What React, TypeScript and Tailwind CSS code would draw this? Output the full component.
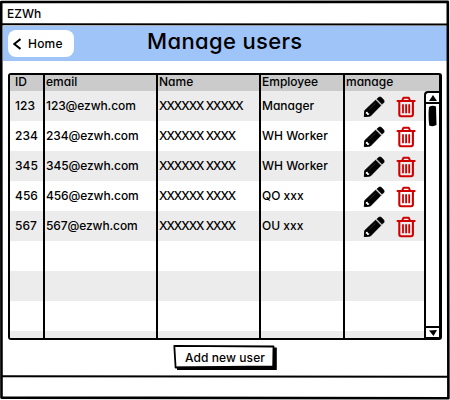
import React from "react";

const users = [
  { id: "123", email: "123@ezwh.com", name: "XXXXXX XXXXX", role: "Manager" },
  { id: "234", email: "234@ezwh.com", name: "XXXXXX XXXX", role: "WH Worker" },
  { id: "345", email: "345@ezwh.com", name: "XXXXXX XXXX", role: "WH Worker" },
  { id: "456", email: "456@ezwh.com", name: "XXXXXX XXXX", role: "QO xxx" },
  { id: "567", email: "567@ezwh.com", name: "XXXXXX XXXX", role: "OU xxx" },
];

function Pencil() {
  return (
    <svg width="22" height="22" viewBox="0 0 22 22" aria-hidden="true">
      <path d="M1.3 20.6L1.8 14.6L12.6 4.2L17.8 9.4L7.4 20Z" stroke="#000" strokeWidth="1" strokeLinejoin="round" />
      <path d="M13.8 3.1L15.8 1.3Q17 .5 18.2 1.3L20.8 3.9Q21.6 5.2 20.9 6.4L19 8.3Z" stroke="#000" strokeWidth=".6" />
      <path d="M3 16L4.6 15.7L5 17.2L6.4 17.5L6 18.7L4.3 18.9L3.7 17.8L2.7 17.7Z" fill="#fff" />
      <path d="M6.2 13.5L12.5 7.3" stroke="#555" strokeWidth=".5" />
    </svg>
  );
}

function Trash() {
  return (
    <svg width="20" height="22" viewBox="0 0 20 22" fill="none" stroke="#d00000" aria-hidden="true">
      <path d="M1.6 5H18.6" strokeWidth="2.2" strokeLinecap="round" />
      <path d="M6.2 4.5L7.5 1.7H12.7L14 4.5" strokeWidth="1.9" strokeLinejoin="round" />
      <path d="M3.3 5.5V18.3Q3.3 20.2 5.2 20.2H15Q16.9 20.2 16.9 18.3V5.5" strokeWidth="2.1" />
      <path d="M7 8.3V17.2M10.1 8.3V17.2M13.2 8.3V17.2" strokeWidth="1.8" />
    </svg>
  );
}

function ScrollBar() {
  return (
    <div className="absolute right-0 top-[16px] flex h-[248px] w-[15px] flex-col items-center rounded-tl-sm border-2 border-r-0 border-black bg-white">
      <div className="flex h-[11px] w-full shrink-0 items-center justify-center border-b-2 border-black">
        <svg width="8" height="6" viewBox="0 0 8 6" aria-hidden="true"><path d="M4 0L8 6H0Z" /></svg>
      </div>
      <svg className="mt-px shrink-0" width="9" height="22" viewBox="0 0 9 22" aria-hidden="true"><path d="M1 2Q4.5-.3 8 1.5L8.5 20Q5 22 1.2 20.5Q0 10 1 2Z" /></svg>
      <div className="mt-auto flex h-[11px] w-full items-center justify-center border-t-2 border-black">
        <svg width="8" height="6" viewBox="0 0 8 6" aria-hidden="true"><path d="M0 .5L8 0L4.5 6Z" /></svg>
      </div>
    </div>
  );
}

const grid = "grid grid-cols-[35px_113px_103px_84px_1fr]";
const cell = "border-r-2 border-black whitespace-nowrap flex items-center";
const head = "border-r-2 border-black whitespace-nowrap pl-px leading-[14px]";

export default function App() {
  return (
    <div className="relative flex h-[400px] w-[450px] flex-col overflow-hidden bg-white font-['Inter','Open_Sans',sans-serif] text-[12px] font-medium text-black [font-feature-settings:'cv11']">
      <div className="flex h-[26px] shrink-0 items-center pl-[7px] pt-px">EZWh</div>
      <header className="mx-[3px] flex h-[35px] shrink-0 items-center bg-[#9fc4f8]">
        <button className="ml-[5px] flex h-[27px] w-[66px] items-center rounded-[8px] bg-white pl-[5px] tracking-[0.2px]">
          <svg className="mr-[7px]" width="8" height="12" viewBox="0 0 8 12" fill="none" stroke="#000" strokeWidth="2" aria-hidden="true"><path d="M7.5 1L1.2 6L7.5 11" /></svg>
          Home
        </button>
        <h1 className="-mt-[5px] ml-[73px] text-[22px] leading-[26px] tracking-[0.35px] whitespace-nowrap">Manage users</h1>
      </header>
      <main className="relative ml-[8px] mt-[12px] h-[267px] w-[434px] shrink-0 overflow-hidden rounded-[3px] border-[2px] border-r-[3px] border-black">
        <div className={`${grid} h-[16px] bg-[#cbcbcb]`}>
          <div className="border-r-2 border-black pl-[5px] leading-[14px]">ID</div>
          <div className={head}>email</div>
          <div className={head}>Name</div>
          <div className={head}>Employee</div>
          <div className="pl-px leading-[14px]">manage</div>
        </div>
        {users.map((u) => (
          <div key={u.id} className={`${grid} h-[30px] odd:bg-white even:bg-[#ececec]`}>
            <div className={`${cell} pl-[5px]`}>{u.id}</div>
            <div className={`${cell} pl-px tracking-[-0.1px]`}>{u.email}</div>
            <div className={`${cell} pl-px tracking-[-1px]`}>{u.name}</div>
            <div className={`${cell} pl-px`}>{u.role}</div>
            <div className="flex items-center gap-[11px] pl-[18px] pt-[2px]"><Pencil /><Trash /></div>
          </div>
        ))}
        {[0, 1, 2, 3].map((n) => (
          <div key={n} className={`${grid} h-[30px] odd:bg-white even:bg-[#ececec]`}>
            <div className={cell} /><div className={cell} /><div className={cell} /><div className={cell} /><div />
          </div>
        ))}
        <ScrollBar />
      </main>
      <button className="ml-[173px] mt-[5px] flex h-[25px] w-[104px] shrink-0 items-center justify-center tracking-[0.08px]">Add new user</button>
      <svg className="pointer-events-none absolute inset-0" width="450" height="400" viewBox="0 0 450 400" fill="none" stroke="#000" aria-hidden="true">
        <path d="M1.2 2L447.8 1.9L448.4 398.2L1.5 397.6Z" strokeWidth="2.6" strokeLinejoin="round" />
        <path d="M2 24.2L448 24.5M2 376.3L448 376.8" strokeWidth="2" />
        <path d="M175 345.8L273.5 346.5L273.2 366.5L175.6 367.5L174.3 345.8Z" strokeWidth="1.8" strokeLinejoin="round" />
        <path d="M177 368.3H275.2V347.5" strokeWidth="3.2" />
      </svg>
    </div>
  );
}
